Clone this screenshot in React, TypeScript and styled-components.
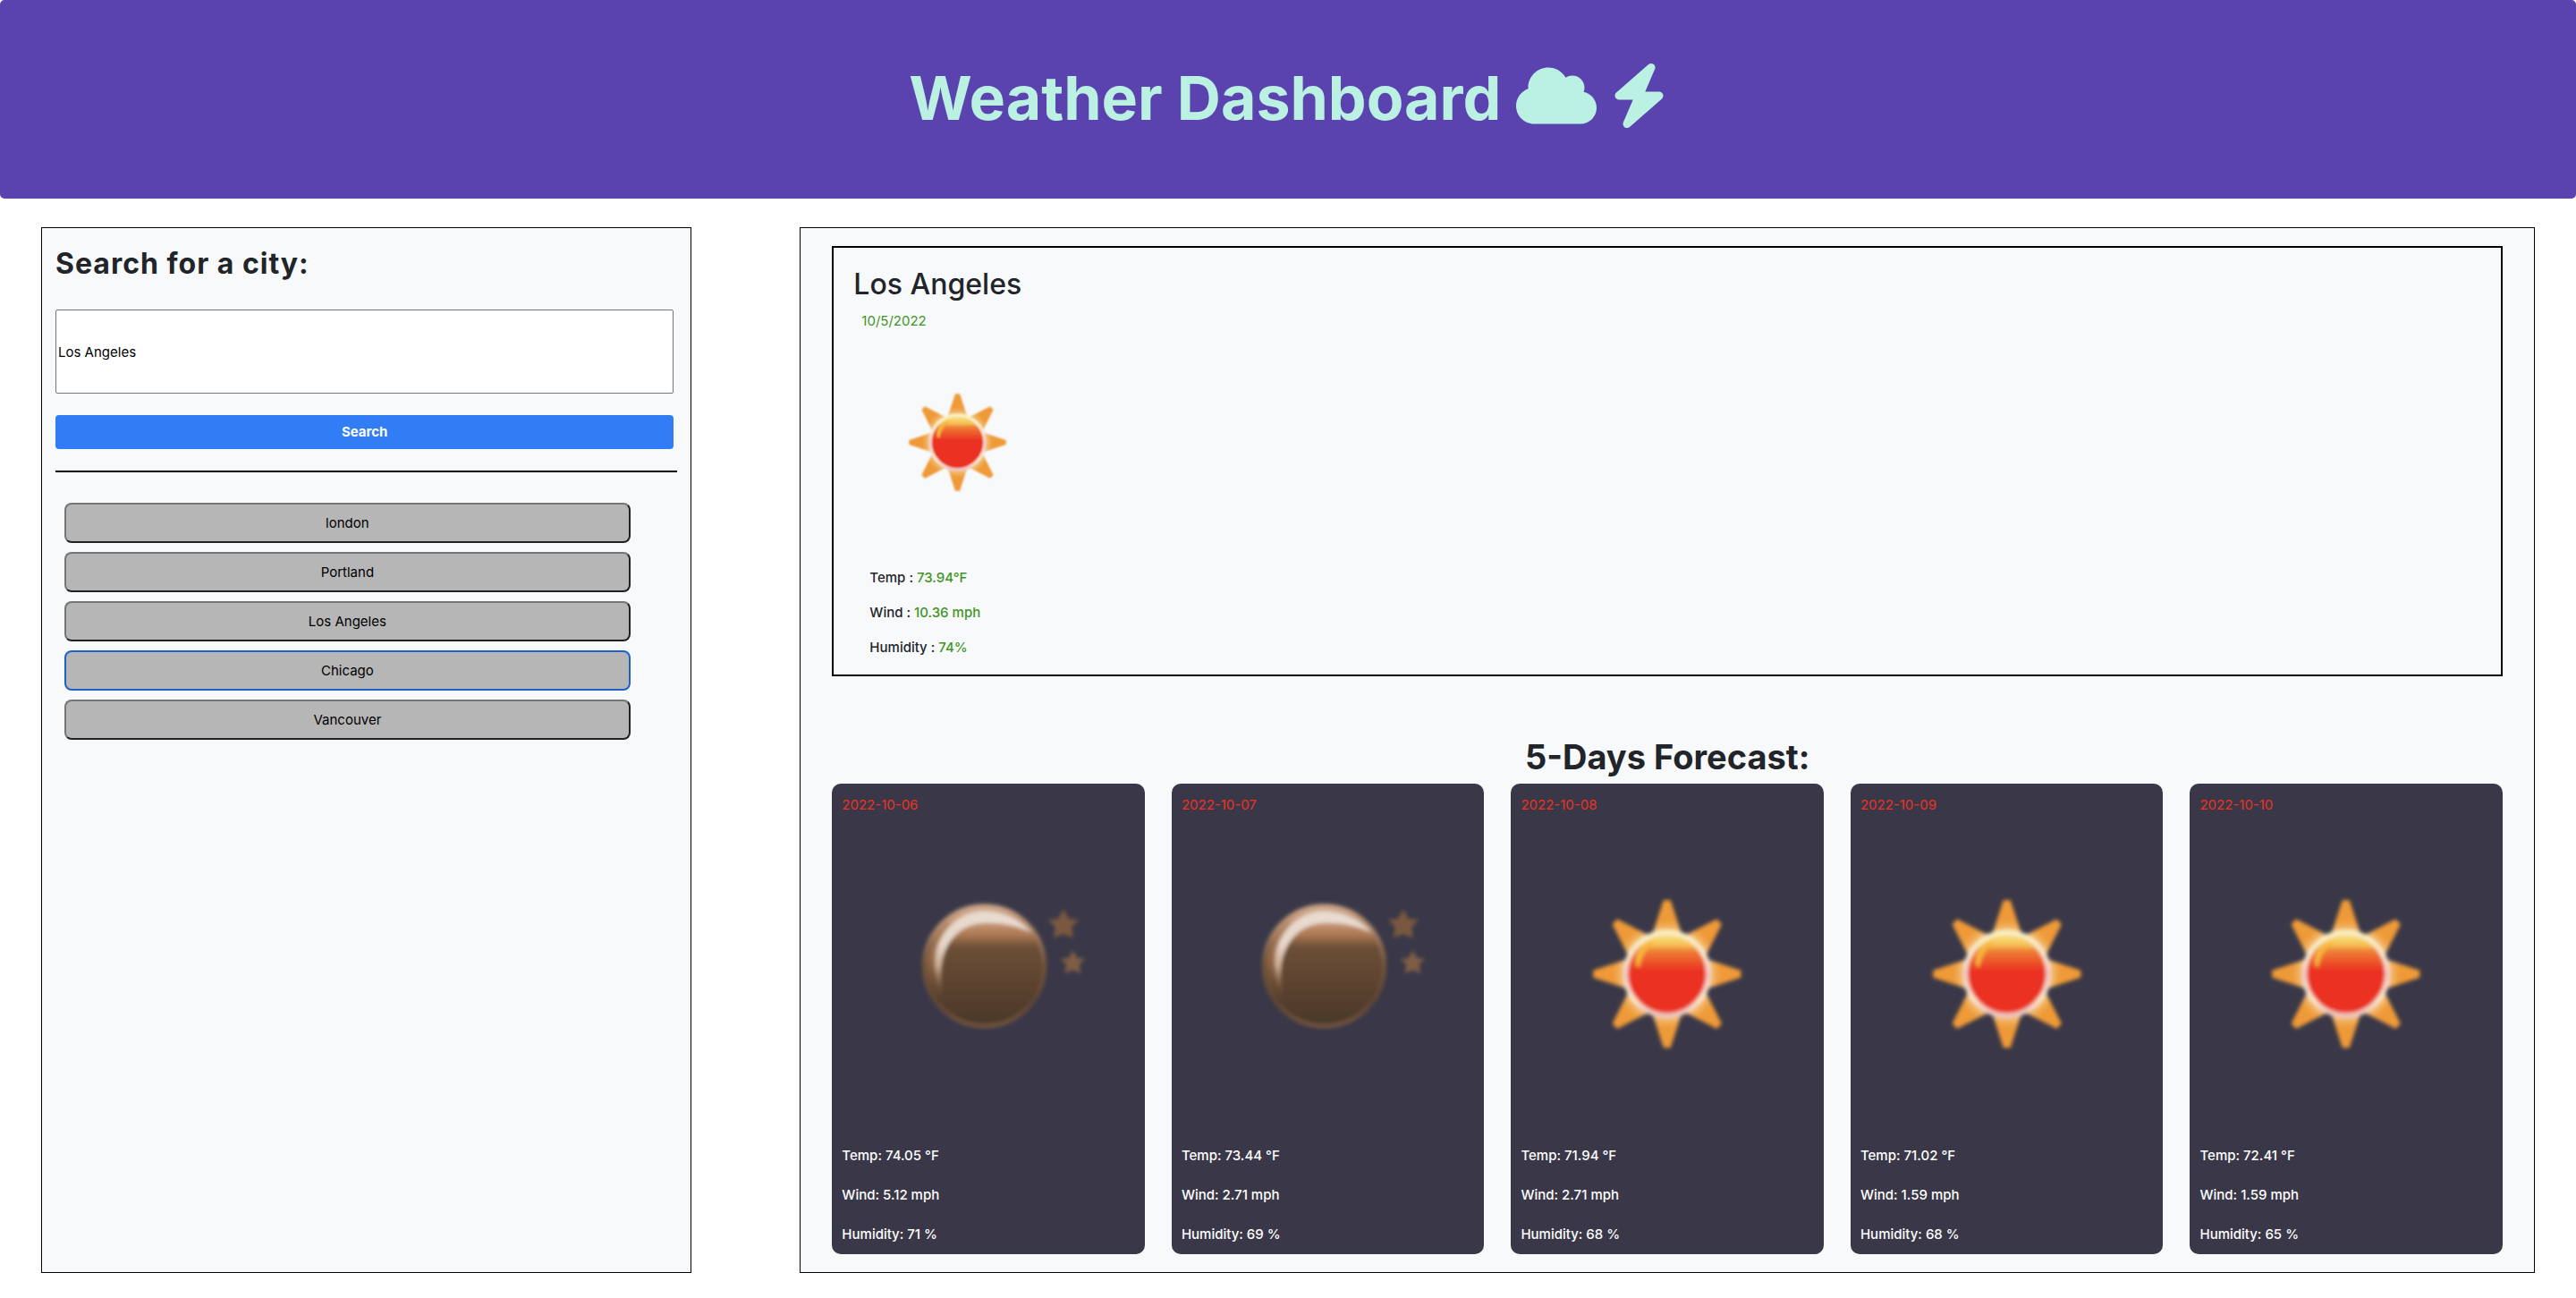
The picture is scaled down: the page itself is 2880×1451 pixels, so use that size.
import React, { useState } from "react";
import styled, { createGlobalStyle } from "styled-components";
import { FaCloud, FaBolt } from "react-icons/fa6";

const GlobalStyle = createGlobalStyle`
  *, *::before, *::after { box-sizing: border-box; }
  body {
    margin: 0;
    background: #ffffff;
    color: #212529;
    font-family: Inter, "Liberation Sans", sans-serif;
    font-size: 15px;
    line-height: 24px;
  }
  h1, h2, h3, p, dl, dd, ul { margin: 0; padding: 0; }
`;

const Header = styled.header`
  padding: 66px 32px 70px;
  border-radius: 5px;
  background: #5a43ae;
  color: #baf1e3;
  text-align: center;
`;

const Title = styled.h1`
  font-size: 68px;
  line-height: 86px;
  font-weight: 700;

  svg {
    height: 72px;
    vertical-align: -9px;
  }
`;

const CloudIcon = styled(FaCloud)`
  width: 90px;
`;

const BoltIcon = styled(FaBolt)`
  width: 63px;
`;

const Layout = styled.main`
  display: grid;
  grid-template-columns: 3fr 8fr;
  gap: 121px;
  padding: 32px 46px 28px;
`;

const Panel = styled.section<{ $pad: string }>`
  padding: ${(p) => p.$pad};
  border: 1px solid #000000;
  background: #f8f9fb;
`;

const SearchForm = styled.form`
  display: flex;
  flex-direction: column;
  padding-right: 4px;
`;

const SearchLabel = styled.label`
  margin-bottom: 32px;
  font-size: 32px;
  line-height: 38px;
  font-weight: 700;
  letter-spacing: 1px;
`;

const SearchInput = styled.input`
  height: 94px;
  margin-bottom: 24px;
  padding: 1px 2px;
  border: 1px solid #767676;
  border-radius: 2px;
  background: #ffffff;
  color: #000000;
  font: inherit;
`;

const SearchButton = styled.button`
  height: 38px;
  border: 0;
  border-radius: 4px;
  background: #307df6;
  color: #ffffff;
  font: inherit;
  font-weight: 700;
`;

const Divider = styled.hr`
  height: 2px;
  margin: 24px 0 34px;
  border: 0;
  background: #000000;
`;

const CityList = styled.ul`
  display: flex;
  flex-direction: column;
  gap: 10px;
  width: 91%;
  margin-left: 10px;
  list-style: none;
`;

const CityButton = styled.button<{ $active: boolean }>`
  display: block;
  width: 100%;
  height: 45px;
  border: 2px solid;
  border-color: ${(p) => (p.$active ? "#1f5fc8" : "#767676 #212121 #212121 #767676")};
  border-radius: 8px;
  background: #b6b6b6;
  color: #000000;
  font: inherit;
`;

const Current = styled.article`
  padding: 22px 22px 18px;
  border: 2px solid #000000;
`;

const CityName = styled.h2`
  font-size: 32px;
  line-height: 38px;
  font-weight: 500;
`;

const CurrentDate = styled.p`
  padding: 10px 9px 16px;
  color: #3f9626;
`;

const CurrentArt = styled.div`
  width: 215px;
  margin: 0 9px 32px;
`;

const Stats = styled.dl`
  display: flex;
  flex-direction: column;
  gap: 15px;
  padding: 0 18px;
  font-weight: 500;
`;

const Stat = styled.div`
  display: flex;
  gap: 4px;
`;

const StatValue = styled.dd`
  color: #3f9626;
`;

const ForecastTitle = styled.h2`
  margin: 66px 0 6px;
  font-size: 38px;
  line-height: 48px;
  font-weight: 700;
  text-align: center;
`;

const Cards = styled.div`
  display: grid;
  grid-template-columns: repeat(5, 1fr);
  gap: 30px;
`;

const Card = styled.article`
  padding: 12px 11px 10px;
  border-radius: 10px;
  background: #3a3848;
  color: #ffffff;
  font-weight: 500;
`;

const CardDate = styled.h3`
  color: #ea3323;
  font-size: 15px;
  line-height: 24px;
  font-weight: 400;
`;

const CardArt = styled.div`
  margin: 13px 0 27px;
`;

const CardLine = styled.p`
  & + & {
    margin-top: 20px;
  }
`;

const Art = styled.svg`
  display: block;
  width: 100%;
  height: auto;
`;

function SunIcon({ id }: { id: string }) {
  return (
    <Art viewBox="0 0 100 100" role="img" aria-label="Clear sky">
      <defs>
        <linearGradient id={`${id}-disc`} x1="0" y1="0" x2="0" y2="1">
          <stop offset="0" stopColor="#fae7a4" />
          <stop offset="0.1" stopColor="#f7cf62" />
          <stop offset="0.16" stopColor="#f5bd55" />
          <stop offset="0.22" stopColor="#ee8034" />
          <stop offset="0.46" stopColor="#eb3323" />
          <stop offset="1" stopColor="#eb3323" />
        </linearGradient>
        <linearGradient id={`${id}-ring`} x1="0" y1="0" x2="0" y2="1">
          <stop offset="0" stopColor="#faf0c4" />
          <stop offset="0.3" stopColor="#f8e8cf" />
          <stop offset="0.5" stopColor="#f0ccc6" />
          <stop offset="0.8" stopColor="#f9ead0" />
          <stop offset="1" stopColor="#efc5be" />
        </linearGradient>
        <radialGradient id={`${id}-ray`} gradientUnits="userSpaceOnUse" cx="50" cy="50" r="26">
          <stop offset="0.58" stopColor="#f3bd70" />
          <stop offset="0.7" stopColor="#ef9a38" />
          <stop offset="1" stopColor="#ef9a38" />
        </radialGradient>
        <filter id={`${id}-soft`} x="-10%" y="-10%" width="120%" height="120%">
          <feGaussianBlur stdDeviation="0.6" />
        </filter>
      </defs>
      <g filter={`url(#${id}-soft)`}>
        {[0, 45, 90, 135, 180, 225, 270, 315].map((angle) => (
          <path
            key={angle}
            d="M44.6 37 L45.6 34.6 L48.8 24.8 H51.2 L54.4 34.6 L55.4 37 Z"
            fill={`url(#${id}-ray)`}
            transform={`rotate(${angle} 50 50)`}
          />
        ))}
        <circle cx="50" cy="50" r="14.2" fill={`url(#${id}-disc)`} stroke={`url(#${id}-ring)`} strokeWidth="1.7" />
        <path d="M39.6 47.5 Q38.4 42 43.5 39.4 Q45.4 39 46 39.4 Q41.6 42 40.6 47.5 Z" fill="#f6b53e" />
      </g>
    </Art>
  );
}

function MoonIcon({ id }: { id: string }) {
  const star = "M0 -5.2 L1.8 -1.9 L5.2 -1.6 L2.8 0.9 L3.3 4.6 L0 3.2 L-3.3 4.6 L-2.8 0.9 L-5.2 -1.6 L-1.8 -1.9 Z";
  return (
    <Art viewBox="0 0 100 100" role="img" aria-label="Clear night">
      <defs>
        <linearGradient id={`${id}-disc`} x1="0" y1="0" x2="0" y2="1">
          <stop offset="0" stopColor="#d2b096" />
          <stop offset="0.15" stopColor="#c59473" />
          <stop offset="0.25" stopColor="#a87550" />
          <stop offset="0.34" stopColor="#6c4f38" />
          <stop offset="0.65" stopColor="#5c432f" />
          <stop offset="1" stopColor="#49382a" />
        </linearGradient>
        <linearGradient id={`${id}-rim`} x1="0" y1="0" x2="0" y2="1">
          <stop offset="0" stopColor="#c9a285" />
          <stop offset="0.5" stopColor="#745439" />
          <stop offset="0.8" stopColor="#5e4636" />
          <stop offset="1" stopColor="#76553e" />
        </linearGradient>
        <linearGradient id={`${id}-edge`} x1="0" y1="0" x2="0" y2="1">
          <stop offset="0" stopColor="#b88a6a" />
          <stop offset="0.5" stopColor="#8d6545" />
          <stop offset="1" stopColor="#6a4a33" stopOpacity="0" />
        </linearGradient>
        <linearGradient id={`${id}-shine`} x1="0.6" y1="0" x2="0.2" y2="1">
          <stop offset="0" stopColor="#e9dcd1" />
          <stop offset="0.5" stopColor="#e6d6c8" />
          <stop offset="0.72" stopColor="#c8a78e" />
          <stop offset="0.95" stopColor="#7d5b42" stopOpacity="0" />
        </linearGradient>
        <filter id={`${id}-soft`} x="-10%" y="-10%" width="120%" height="120%">
          <feGaussianBlur stdDeviation="0.7" />
        </filter>
      </defs>
      <g filter={`url(#${id}-soft)`}>
        <circle cx="48.7" cy="47.3" r="20.5" fill={`url(#${id}-disc)`} stroke={`url(#${id}-rim)`} strokeWidth="1.4" />
        <path d="M36 32 Q24 46 33 60 L34.6 57 Q32 46 38 34 Z" fill={`url(#${id}-edge)`} />
        <path
          d="M65 36 C60 30.5 54 28.6 48.5 28.6 C39 28.6 32 37 31.8 46 C31.8 51 32.8 55 35 60 C33.9 53 33.6 49 34.2 46 C36 37 42 33 48.5 32.6 C55 32.4 60 33.5 65 36 Z"
          fill={`url(#${id}-shine)`}
        />
        <path d={star} transform="translate(75.7 33.1)" fill="#7a5940" />
        <path d={star} transform="translate(78.9 46.1) scale(0.8)" fill="#7f5d44" />
      </g>
    </Art>
  );
}

const cities = ["london", "Portland", "Los Angeles", "Chicago", "Vancouver"];

const current = [
  { label: "Temp :", value: "73.94°F" },
  { label: "Wind :", value: "10.36 mph" },
  { label: "Humidity :", value: "74%" },
];

const forecast = [
  { date: "2022-10-06", icon: "moon", temp: "74.05", wind: "5.12", humidity: "71" },
  { date: "2022-10-07", icon: "moon", temp: "73.44", wind: "2.71", humidity: "69" },
  { date: "2022-10-08", icon: "sun", temp: "71.94", wind: "2.71", humidity: "68" },
  { date: "2022-10-09", icon: "sun", temp: "71.02", wind: "1.59", humidity: "68" },
  { date: "2022-10-10", icon: "sun", temp: "72.41", wind: "1.59", humidity: "65" },
];

export default function App() {
  const [query, setQuery] = useState("Los Angeles");
  const [active, setActive] = useState("Chicago");

  return (
    <>
      <GlobalStyle />
      <Header>
        <Title>
          Weather Dashboard <CloudIcon aria-hidden="true" /> <BoltIcon aria-hidden="true" />
        </Title>
      </Header>
      <Layout>
        <Panel $pad="21px 15px">
          <SearchForm onSubmit={(e) => e.preventDefault()}>
            <SearchLabel htmlFor="city">Search for a city:</SearchLabel>
            <SearchInput id="city" type="text" value={query} onChange={(e) => setQuery(e.target.value)} />
            <SearchButton type="submit">Search</SearchButton>
          </SearchForm>
          <Divider />
          <CityList>
            {cities.map((city) => (
              <li key={city}>
                <CityButton type="button" $active={city === active} onClick={() => setActive(city)}>
                  {city}
                </CityButton>
              </li>
            ))}
          </CityList>
        </Panel>
        <Panel $pad="20px 35px">
          <Current>
            <CityName>Los Angeles</CityName>
            <CurrentDate>10/5/2022</CurrentDate>
            <CurrentArt>
              <SunIcon id="now" />
            </CurrentArt>
            <Stats>
              {current.map((s) => (
                <Stat key={s.label}>
                  <dt>{s.label}</dt>
                  <StatValue>{s.value}</StatValue>
                </Stat>
              ))}
            </Stats>
          </Current>
          <ForecastTitle>5-Days Forecast:</ForecastTitle>
          <Cards>
            {forecast.map((d) => (
              <Card key={d.date}>
                <CardDate>{d.date}</CardDate>
                <CardArt>{d.icon === "sun" ? <SunIcon id={d.date} /> : <MoonIcon id={d.date} />}</CardArt>
                <CardLine>Temp: {d.temp} °F</CardLine>
                <CardLine>Wind: {d.wind} mph</CardLine>
                <CardLine>Humidity: {d.humidity} %</CardLine>
              </Card>
            ))}
          </Cards>
        </Panel>
      </Layout>
    </>
  );
}
